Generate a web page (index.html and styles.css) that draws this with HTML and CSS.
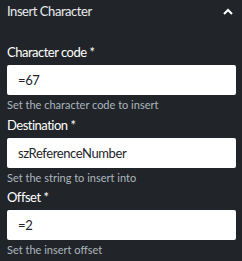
FILE: index.html
```html
<!DOCTYPE html>
<html>
<head>
<meta charset="utf-8">
<link rel="stylesheet" href="styles.css">
</head>
<body>
<div class="panel">
  <div class="panel-header">
    <span class="panel-title">Insert Character</span>
    <svg class="chevron" width="10" height="7" viewBox="0 0 10 7"><path d="M1 6 L5 2 L9 6" fill="none" stroke="#ffffff" stroke-width="2"/></svg>
  </div>
  <div class="field">
    <label class="field-label">Character code *</label>
    <div class="field-input">=67</div>
    <div class="field-help">Set the character code to insert</div>
  </div>
  <div class="field">
    <label class="field-label">Destination *</label>
    <div class="field-input">szReferenceNumber</div>
    <div class="field-help">Set the string to insert into</div>
  </div>
  <div class="field">
    <label class="field-label">Offset *</label>
    <div class="field-input">=2</div>
    <div class="field-help">Set the insert offset</div>
  </div>
</div>
</body>
</html>
```
FILE: styles.css
```css
html, body {
  margin: 0;
  padding: 0;
  background: #212529;
}
body {
  font-family: Lato, "Open Sans", sans-serif;
  color: #f8f9fa;
}
.panel {
  padding: 0 6px 0 7px;
}
.panel-header {
  display: flex;
  justify-content: space-between;
  align-items: flex-start;
  padding-top: 3px;
  padding-right: 3px;
}
.panel-title {
  font-size: 13px;
  line-height: 16px;
  letter-spacing: -0.45px;
  color: #e9ecef;
}
.chevron {
  display: block;
  margin-top: 5px;
}
.field {
  display: flex;
  flex-direction: column;
}
.panel-header + .field {
  margin-top: 25px;
}
.field-label {
  font-size: 13px;
  line-height: 16px;
  letter-spacing: -0.5px;
  color: #ffffff;
  margin-bottom: 5px;
}
.field-input {
  height: 30px;
  box-sizing: border-box;
  background: #ffffff;
  border-radius: 2px;
  padding: 0 11px;
  display: flex;
  align-items: center;
  font-size: 13px;
  letter-spacing: -0.4px;
  color: #212529;
}
.field-help {
  font-size: 11px;
  line-height: 14px;
  margin-top: 3px;
  color: #adb5bd;
  margin-bottom: 4.5px;
}
```
